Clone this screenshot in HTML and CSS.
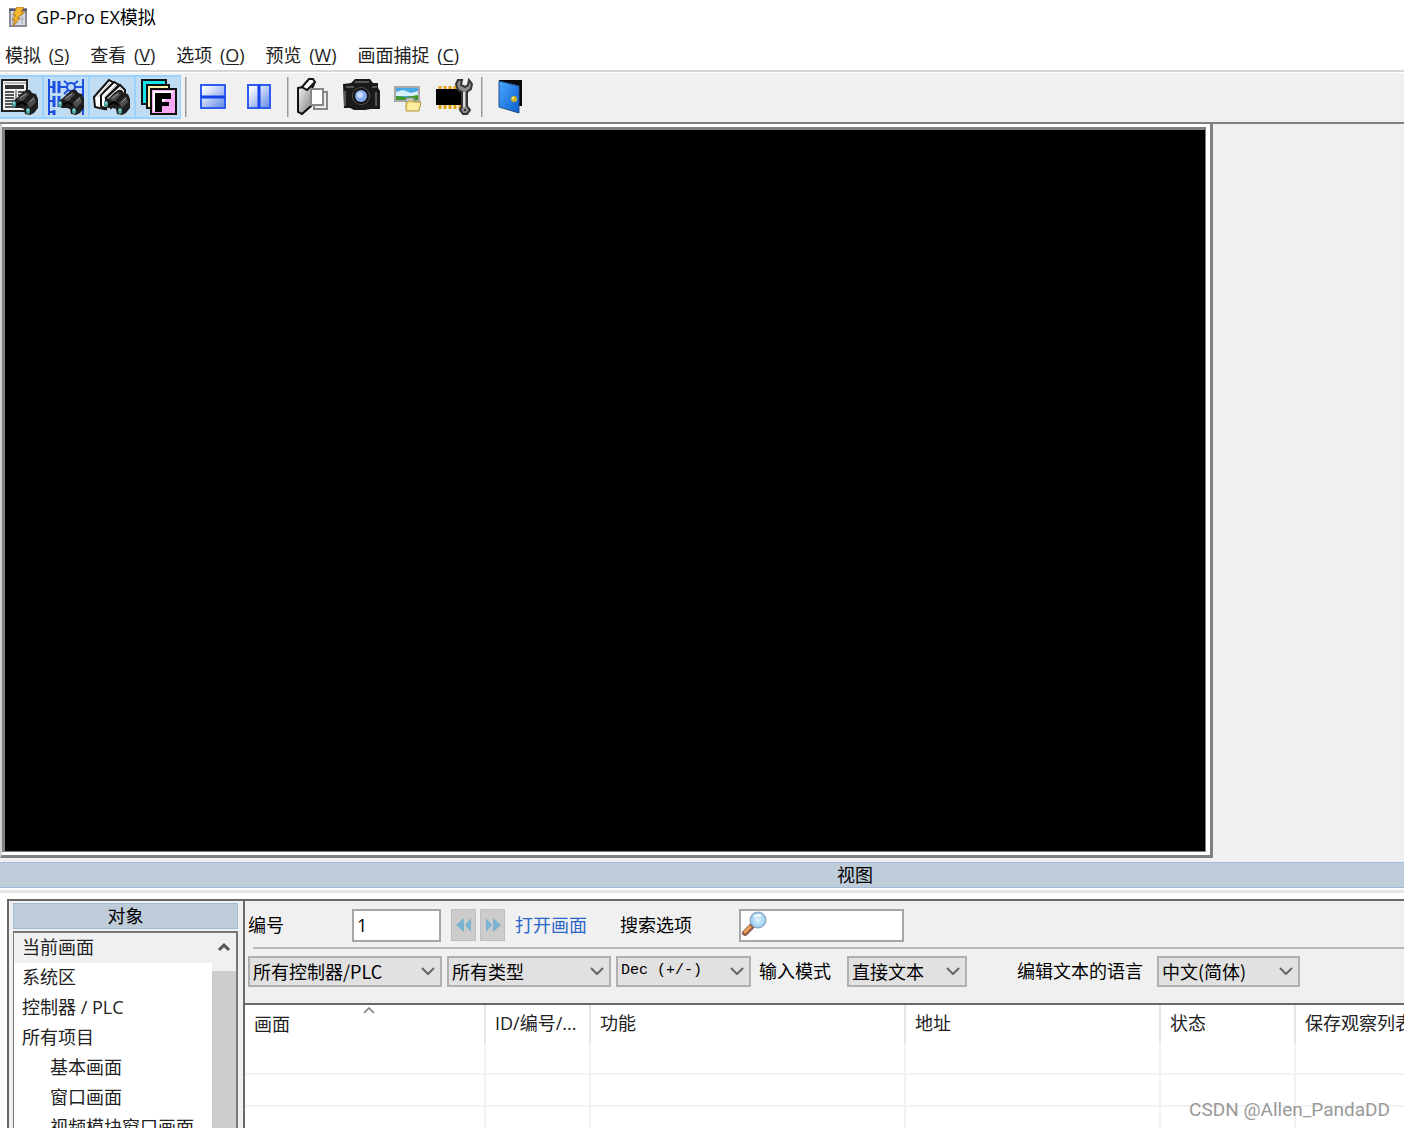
FILE: index.html
```html
<!DOCTYPE html>
<html lang="zh-CN">
<head>
<meta charset="utf-8">
<title>GP-Pro EX模拟</title>
<link rel="stylesheet" href="styles.css">
</head>
<body>
<svg class="defs" width="0" height="0" aria-hidden="true">
  <defs>
    <linearGradient id="pane" x1="0" y1="0" x2="1" y2="1"><stop offset="0.1" stop-color="#fff"/><stop offset="1" stop-color="#5f86e6"/></linearGradient>
    <linearGradient id="door" x1="0" y1="0" x2="1" y2="1"><stop offset="0" stop-color="#4aa8ff"/><stop offset="1" stop-color="#0a5fd0"/></linearGradient>
    <linearGradient id="cover" x1="0" y1="0" x2="1" y2="1"><stop offset="0" stop-color="#fff"/><stop offset="1" stop-color="#777"/></linearGradient>
    <radialGradient id="lens"><stop offset="0" stop-color="#e4f7ff"/><stop offset="1" stop-color="#8fc8ec"/></radialGradient>
    <symbol id="binoculars" viewBox="0 0 26 25">
      <path d="M0 12 L6 7 L10 3 L14 0 L18 0 L20 3 L24 4 L26 9 L26 18 L22 23 L18 25 L13 24 L12 19 L9 18 L4 18 L0 16Z" fill="#1e1e1e"/>
      <path d="M5 9 L14 2 L17 4 L10 12Z M15 13 L22 6 L24 12 L18 18Z" fill="#4d4d4d"/>
      <path d="M8 8 L14 4 M18 12 L22 8" stroke="#9a9a9a" stroke-width="1"/>
      <path d="M5 15 L10 12 L14 15" stroke="#000" stroke-width="2" fill="none"/>
      <ellipse cx="2" cy="14" rx="2" ry="3" fill="#4aa69f"/><path d="M2 12v2" stroke="#c9fff9"/>
      <ellipse cx="16" cy="21" rx="2" ry="3" fill="#4aa69f"/><path d="M16 19v2" stroke="#c9fff9"/>
    </symbol>
    <symbol id="chevron" viewBox="0 0 14 8"><path d="M1 1l6 6 6-6" fill="none" stroke="#666" stroke-width="2"/></symbol>
  </defs>
</svg>

<header class="titlebar">
  <svg class="app-icon" viewBox="0 0 20 20" aria-hidden="true">
    <rect x="2" y="2" width="16" height="17" fill="#d9d9e2" stroke="#888a98" stroke-width="2"/>
    <path d="M1 3h18" stroke="#4e5273" stroke-width="2"/><path d="M5 7v10M9 8v9M14 7v10M4 12h12" stroke="#a5a7b5"/>
    <path d="M9 0h7l-3 5h4l-8 6h3l-7 8 2-6H4l4-5H5z" fill="#f5b92d" stroke="#b87b1c"/>
  </svg>
  <h1 class="title">GP-Pro EX模拟</h1>
</header>

<nav class="menubar" aria-label="菜单">
  <button class="menu">模拟 <span>(<u>S</u>)</span></button>
  <button class="menu">查看 <span>(<u>V</u>)</span></button>
  <button class="menu">选项 <span>(<u>O</u>)</span></button>
  <button class="menu">预览 <span>(<u>W</u>)</span></button>
  <button class="menu">画面捕捉 <span>(<u>C</u>)</span></button>
</nav>

<div class="toolbar" role="toolbar">
  <div class="toggles">
    <button class="tool on" aria-label="属性查看">
      <svg viewBox="0 0 38 38"><path d="M1 2h25v31H1z" fill="#f4f4f4" stroke="#222" stroke-width="2"/><path d="M3 4h22v2H3z" fill="#bbb"/><path d="M4 7h19v4H4z" fill="#333"/><path d="M4 14h9M4 17h9M4 20h9M4 23h9M4 26h9M4 29h12M17 14h6M17 17h6" stroke="#555" stroke-width="2"/><path d="M15 12v14" stroke="#999" stroke-width="2"/><use href="#binoculars" x="11" y="12" width="26" height="25"/></svg>
    </button>
    <button class="tool on" aria-label="逻辑查看">
      <svg viewBox="0 0 38 38"><g fill="none" stroke="#1c4fe0" stroke-width="2"><path d="M2 1v36M36 1v36M2 9h5M12 9h7M28 9h8M2 23h5M12 23h8M2 34h5"/><path d="M7 3v12M12 3v12M7 18v11M12 18v11M7 32v5" stroke-width="3"/><circle cx="24" cy="9" r="4"/><path d="M17 3l4 3M31 3l-4 3M17 16l4-4M31 16l-4-4M19 17h17"/></g><use href="#binoculars" x="11" y="12" width="26" height="25"/></svg>
    </button>
    <button class="tool on" aria-label="地址查看">
      <svg viewBox="0 0 38 38"><g fill="#fff" stroke="#111" stroke-width="2"><path d="M1 19L16 2l5 3-10 13v13l-9-2z"/><path d="M8 17L21 4l5 3-13 13v11l-5-3z"/><path d="M13 20L27 7l5 5v7L18 30z"/></g><path d="M5 19L17 5M11 20l12-13M16 22l12-12" stroke="#aaa"/><use href="#binoculars" x="11" y="12" width="26" height="25"/></svg>
    </button>
    <button class="tool on" aria-label="功能查看">
      <svg viewBox="0 0 38 38"><g stroke="#111" stroke-width="2"><path d="M3 2h24v24H3z" fill="#16e4e8"/><path d="M8 7h22v23H8z" fill="#fff0ae"/><path d="M12 11h25v25H12z" fill="#f8a8f5"/></g><path d="M14 13h21L14 34z" fill="#fff"/><path d="M16 15h16v6h-9v3h7v4h-7v6h-7z" fill="#000"/></svg>
    </button>
  </div>
  <span class="tool-sep"></span>
  <button class="tool" aria-label="上下分割">
    <svg viewBox="0 0 38 38"><path d="M6 7h24v11H6zM6 19h24v11H6z" fill="url(#pane)"/><path d="M6 7h24v23H6z" fill="none" stroke="#2f5cf0" stroke-width="2"/><path d="M6 19h24" stroke="#1543ea" stroke-width="3"/></svg>
  </button>
  <button class="tool" aria-label="左右分割">
    <svg viewBox="0 0 38 38"><path d="M7 7h11v23H7zM19 7h11v23H19z" fill="url(#pane)"/><path d="M7 7h22v23H7z" fill="none" stroke="#2f5cf0" stroke-width="2"/><path d="M18 7v23" stroke="#1543ea" stroke-width="3"/></svg>
  </button>
  <span class="tool-sep"></span>
  <button class="tool" aria-label="画面列表">
    <svg viewBox="0 0 38 38"><path d="M17 14h13v17H17z" fill="#eee" stroke="#888" stroke-width="2"/><path d="M1 10l5-1 8-7 3 4-3 7v15L5 36l-4-2z" fill="url(#cover)" stroke="#111" stroke-width="2"/><path d="M5 9l7-8h4l2 3-8 8z" fill="#fff" stroke="#111" stroke-width="2"/><path d="M14 11h12v16H14z" fill="#fff" stroke="#888" stroke-width="2"/></svg>
  </button>
  <button class="tool" aria-label="画面捕捉">
    <svg viewBox="0 0 38 38"><path d="M0 6l8-1 4-4h15l3 4h5v5l2 3v18H28l-6 1H11l-4-2H1z" fill="#1a1a1a"/><path d="M12 4h14M3 9h8M2 13v15M29 9h5M33 14v14" stroke="#555" stroke-width="2"/><circle cx="18" cy="18" r="9" fill="#555"/><circle cx="18" cy="18" r="8" fill="#111"/><circle cx="18" cy="18" r="6" fill="#89abf0"/><circle cx="17" cy="17" r="3" fill="#c9dcff"/></svg>
  </button>
  <button class="tool" aria-label="打开捕捉文件夹">
    <svg viewBox="0 0 38 38"><path d="M6 9h24v14H6z" fill="#49a8e8" stroke="#aaa" stroke-width="2"/><path d="M7 14l7-2 8 3 7-2v5H7z" fill="#d7f1fa"/><path d="M7 18l10 1 12-2v5H7z" fill="#3f9a28"/><path d="M17 20h8v4h-8z" fill="#ccc" stroke="#888"/><path d="M17 25l3-2h4l1 1h7l-2 9H17z" fill="#f8df76" stroke="#b19a4b"/><path d="M20 25h11l-2 7H18z" fill="#ffeea2"/></svg>
  </button>
  <button class="tool" aria-label="设备设置">
    <svg viewBox="0 0 38 38"><path d="M5 8v23M10 8v23M15 8v23M20 8v23M25 8v23" stroke="#dfa20f" stroke-width="3"/><path d="M1 11h26v16H1z" fill="#000"/><path d="M23 2l-2 4 2 6 4 2v14l-2 4 3 4h4l3-4-3-4V14l4-3 1-5-3-4-1 5-3 2-4-2 1-5z" fill="#8a8a8a" stroke="#333" stroke-width="2"/><path d="M29 14v15" stroke="#ddd" stroke-width="2"/><circle cx="30" cy="32" r="1" fill="#111"/></svg>
  </button>
  <span class="tool-sep"></span>
  <button class="tool" aria-label="退出">
    <svg viewBox="0 0 38 38"><path d="M8 2h23v26H8z" fill="#0a0a0a"/><path d="M8 3l20 5v27L8 29z" fill="url(#door)" stroke="#234e86"/><circle cx="23" cy="21" r="3" fill="#d8b51f"/><circle cx="22" cy="20" r="1" fill="#fff3a0"/></svg>
  </button>
</div>

<main class="workspace">
  <div class="screen-frame"><div class="screen"></div></div>
</main>

<section class="dock">
  <h2 class="caption dock-caption">视图</h2>
  <div class="dock-body">
    <aside class="objects">
      <h3 class="caption">对象</h3>
      <div class="object-box">
        <ul class="object-list">
          <li class="selected">当前画面</li>
          <li>系统区</li>
          <li>控制器 / PLC</li>
          <li>所有项目</li>
          <li class="child">基本画面</li>
          <li class="child">窗口画面</li>
          <li class="child">视频模块窗口画面</li>
        </ul>
        <div class="scrollbar">
          <button class="scroll-up" aria-label="向上滚动"><svg width="14" height="10" viewBox="0 0 14 10"><path d="M2 8l5-5 5 5" fill="none" stroke="#555" stroke-width="3"/></svg></button>
          <div class="scroll-thumb"></div>
        </div>
      </div>
    </aside>
    <div class="watch">
      <form class="filters">
        <div class="row row-screen">
          <label class="label-number" for="number">编号</label>
          <input class="field number" id="number" type="text" value="1">
          <div class="steps">
            <button class="step" type="button" aria-label="上一个"><svg width="16" height="14" viewBox="0 0 16 14"><path d="M8 0v14L0 7zM15 0v14L9 7z" fill="#7ab4d0"/></svg></button>
            <button class="step" type="button" aria-label="下一个"><svg width="16" height="14" viewBox="0 0 16 14"><path d="M1 0v14l6-7zM8 0v14l8-7z" fill="#7ab4d0"/></svg></button>
          </div>
          <a class="open" href="#screen">打开画面</a>
          <label class="label-search" for="search">搜索选项</label>
          <div class="field search">
            <svg width="26" height="26" viewBox="0 0 26 26" aria-hidden="true"><path d="M4 22l7-7" stroke="#8a5a4c" stroke-width="6" stroke-linecap="round"/><path d="M4 21l5-5" stroke="#f0a050" stroke-width="3" stroke-linecap="round"/><circle cx="17" cy="9" r="8" fill="url(#lens)" stroke="#8c9bb8" stroke-width="1"/><path d="M13 6q3-3 7-1" stroke="#fff" stroke-width="2" fill="none"/></svg>
            <input id="search" type="text">
          </div>
        </div>
        <div class="row row-filter">
          <div class="select w-plc"><select aria-label="控制器"><option>所有控制器/PLC</option></select><svg><use href="#chevron"/></svg></div>
          <div class="select w-type"><select aria-label="类型"><option>所有类型</option></select><svg><use href="#chevron"/></svg></div>
          <div class="select w-format"><select class="mono" aria-label="格式"><option>Dec (+/-)</option></select><svg><use href="#chevron"/></svg></div>
          <label class="label-mode" for="mode">输入模式</label>
          <div class="select w-mode"><select id="mode"><option>直接文本</option></select><svg><use href="#chevron"/></svg></div>
          <label class="label-lang" for="lang">编辑文本的语言</label>
          <div class="select w-lang"><select id="lang"><option>中文(简体)</option></select><svg><use href="#chevron"/></svg></div>
        </div>
      </form>
      <table class="grid">
        <colgroup><col class="c-screen"><col class="c-id"><col class="c-func"><col class="c-addr"><col class="c-state"><col></colgroup>
        <thead><tr>
          <th class="sorted"><svg width="12" height="7" viewBox="0 0 12 7" aria-hidden="true"><path d="M1 6l5-5 5 5" fill="none" stroke="#777" stroke-width="1.500"/></svg><span>画面</span></th>
          <th>ID/编号/...</th><th>功能</th><th>地址</th><th>状态</th><th>保存观察列表</th>
        </tr></thead>
        <tbody>
          <tr><td></td><td></td><td></td><td></td><td></td><td></td></tr>
          <tr><td></td><td></td><td></td><td></td><td></td><td></td></tr>
          <tr><td></td><td></td><td></td><td></td><td></td><td></td></tr>
        </tbody>
      </table>
    </div>
  </div>
</section>
<div class="watermark">CSDN @Allen_PandaDD</div>
</body>
</html>
```
FILE: styles.css
```css
* { box-sizing: border-box; }

body {
  margin: 0;
  height: 100vh;
  display: flex;
  flex-direction: column;
  overflow: hidden;
  background: #f0f0f0;
  color: #000;
  font: 18px/24px "Open Sans", "Noto Sans CJK SC", sans-serif;
}

button, input, select { font: inherit; color: inherit; margin: 0; }
h1, h2, h3, ul { margin: 0; padding: 0; font-size: inherit; font-weight: normal; }
.defs { position: absolute; }

.titlebar {
  flex: none;
  height: 36px;
  display: flex;
  align-items: center;
  gap: 8px;
  padding: 0 8px 2px;
  background: #fff;
}
.app-icon { width: 20px; height: 20px; }

.menubar {
  flex: none;
  height: 36px;
  display: flex;
  align-items: center;
  gap: 21px;
  padding: 4px 5px 0;
  background: #fff;
  border-bottom: 2px solid #d6d6d6;
}
.menu { border: 0; padding: 0; background: none; color: #222; white-space: nowrap; }
.menu span { margin-left: 3px; }
.menu u { text-underline-offset: 2px; }

.toolbar {
  flex: none;
  height: 52px;
  display: flex;
  align-items: center;
  padding-bottom: 2px;
  border-top: 1px solid #fff;
  border-bottom: 2px solid #808080;
}
.toggles { display: flex; margin-left: -3px; }
.tool {
  flex: none;
  width: 46px;
  height: 44px;
  padding: 1px 2px;
  border: 2px solid transparent;
  background: none;
}
.tool.on { background: #c0dcf3; border-color: #99d1ff; border-left-width: 1px; border-right-width: 1px; padding: 1px 3px; }
.tool svg { display: block; width: 38px; height: 38px; }
.tool-sep { flex: none; width: 2px; height: 40px; margin: 0 4px; background: #999; border-right: 1px solid #c8c8c8; }

.workspace {
  flex: 1;
  min-height: 0;
  padding: 0 191px 4px 0;
  display: flex;
}
.screen-frame {
  flex: 1;
  display: flex;
  padding: 3px 4px 3px 0;
  background: #fff;
  border: 3px solid #808080;
  border-width: 0 3px 3px 2px;
  border-left-color: #d0d0d0;
}
.screen { flex: 1; background: #000; border: 2px solid #808080; border-width: 3px 1px 1px 3px; }

.dock { flex: 0 0 266px; overflow: hidden; background: #fff; display: flex; flex-direction: column; }
.caption {
  flex: none;
  height: 26px;
  text-align: center;
  background: #bfccda;
  border: 1px solid #9fbbd9;
}
.dock-caption { border-width: 1px 0; padding-left: 306px; }
.dock-body {
  flex: 1;
  min-height: 0;
  margin-top: 2px;
  padding: 6px 0 0 7px;
  border-top: 3px solid #e6e6e6;
  display: flex;
}

.objects {
  flex: 0 0 236px;
  display: flex;
  flex-direction: column;
  padding: 2px 5px 0 4px;
  background: #f0f0f0;
  border-top: 2px solid #696969;
  border-left: 2px solid #696969;
}
.object-box { flex: 1; min-height: 0; margin-top: 2px; display: flex; background: #fff; border: 2px solid #777; border-bottom: 0; border-left-width: 1px; }
.object-list { flex: 1; overflow: hidden; list-style: none; }
.object-list li { height: 30px; line-height: 28px; padding-left: 8px; color: #222; white-space: nowrap; }
.object-list .selected { background: #f0f0f0; }
.object-list .child { padding-left: 36px; }
.scrollbar { flex: 0 0 24px; display: flex; flex-direction: column; background: #f0f0f0; }
.scroll-up { height: 38px; padding: 0 0 10px; border: 0; background: none; line-height: 0; }
.scroll-thumb { flex: 1; background: #cdcdcd; }

.watch {
  flex: 1;
  min-width: 0;
  overflow: hidden;
  background: #fff;
  border-top: 2px solid #696969;
  border-left: 2px solid #696969;
}
.filters { background: #f0f0f0; border-bottom: 2px solid #696969; }
.row { display: flex; align-items: center; white-space: nowrap; }
.row > * { flex: none; }
.row-screen { height: 46px; padding: 2px 0 0 3px; }
.row-filter { height: 56px; padding: 0 0 8px 3px; position: relative; }
.row-filter::before { content: ""; position: absolute; top: 0; left: 8px; right: 0; height: 2px; background: #b8b8b8; }

.field { height: 33px; background: #fff; border: 2px solid #a6a6a6; }
.label-number { width: 104px; }
.number { width: 89px; padding: 0 3px; }
.steps { display: flex; gap: 4px; margin-left: 10px; }
.step { width: 25px; height: 32px; padding: 0; border: 1px solid #bfbfbf; background: #ccc; line-height: 0; }
.open { margin-left: 10px; color: #2a66c8; text-decoration: none; }
.label-search { width: 119px; margin-left: 33px; }
.search { width: 165px; display: flex; }
.search input { flex: 1; min-width: 0; border: 0; padding: 0; background: none; }

.select { display: grid; height: 31px; align-items: center; }
.select > * { grid-area: 1 / 1; }
.select select { appearance: none; width: 100%; height: 31px; padding: 0 3px; border: 2px solid #b0b0b0; border-radius: 0; background: #e1e1e1; font-family: "Noto Sans CJK SC", sans-serif; }
.select .mono { font-family: "Liberation Mono", monospace; font-size: 15px; }
.select svg { width: 14px; height: 8px; justify-self: end; margin-right: 7px; pointer-events: none; }
.w-plc { width: 194px; }
.w-type { width: 164px; margin-left: 5px; }
.w-format { width: 135px; margin-left: 5px; }
.label-mode { width: 88px; margin-left: 8px; }
.w-mode { width: 120px; }
.label-lang { width: 140px; margin-left: 50px; }
.w-lang { width: 143px; }

.grid { width: 100%; table-layout: fixed; border-collapse: separate; border-spacing: 0; }
.grid th { height: 38px; padding: 0 0 2px 9px; border-right: 2px solid #e5e5e5; text-align: left; font-weight: normal; color: #222; white-space: nowrap; overflow: hidden; }
.grid .sorted { padding: 0 0 8px 9px; line-height: 20px; }
.sorted span { display: block; }
.sorted svg { display: block; margin: 0 auto; }
.grid td { height: 32px; border-right: 2px solid #f2f2f2; border-bottom: 2px solid #f2f2f2; padding: 0; }
.grid th:last-child, .grid td:last-child { border-right: 0; }
.c-screen { width: 241px; }
.c-id { width: 105px; }
.c-func { width: 315px; }
.c-addr { width: 255px; }
.c-state { width: 135px; }

.watermark {
  position: absolute;
  right: 14px;
  bottom: 6px;
  color: #999;
  font-family: Roboto, sans-serif;
  font-size: 19px;
}
```
